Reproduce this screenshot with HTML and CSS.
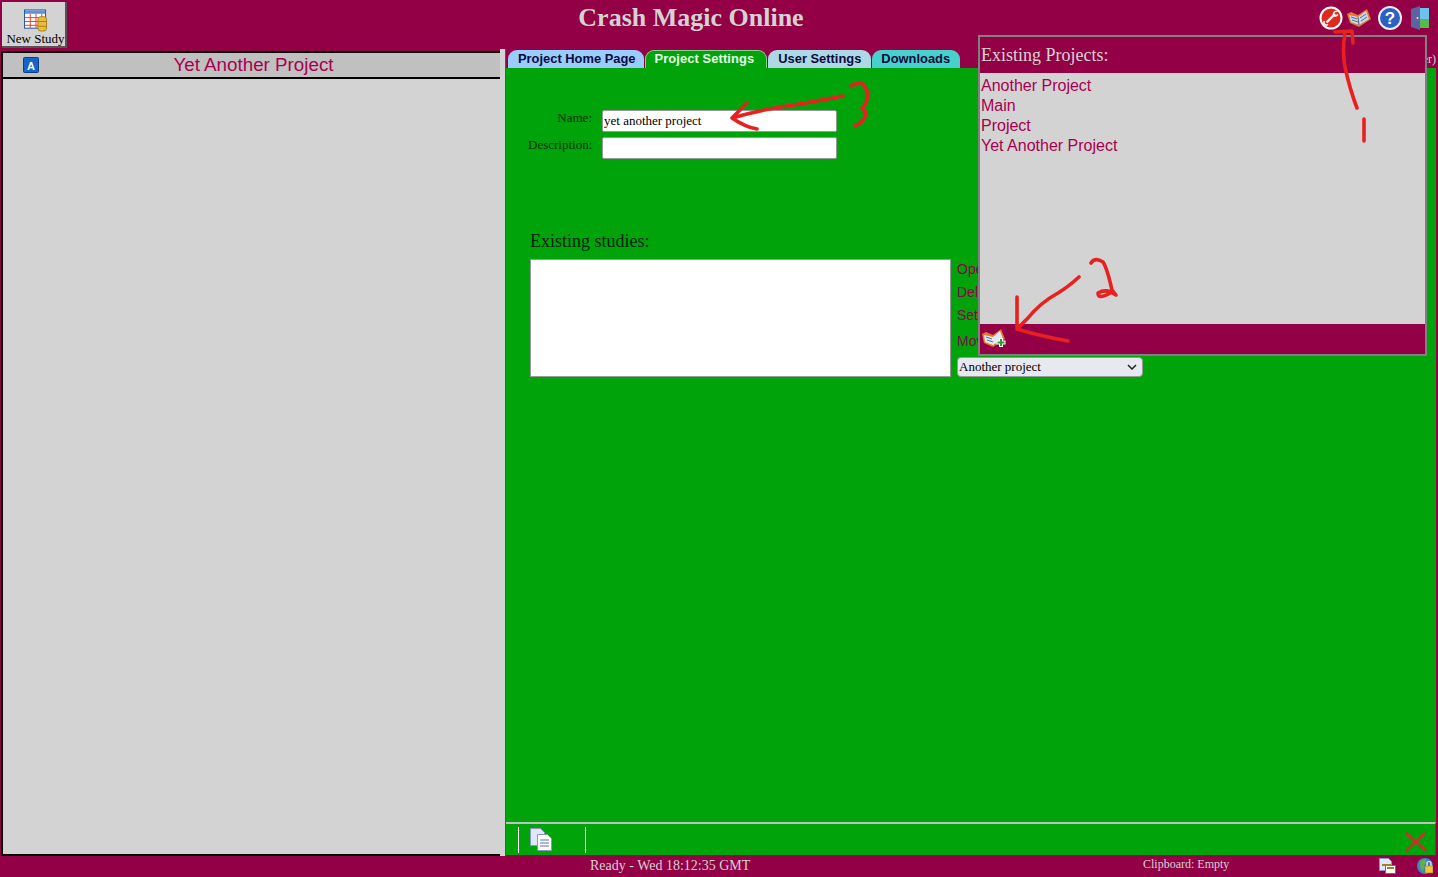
FILE: index.html
```html
<!DOCTYPE html>
<html lang="en">
<head>
  <meta charset="UTF-8" />
  <title>Crash Magic Online</title>
  <link rel="stylesheet" href="styles.css">
</head>
<body>
<div class="app">

  <div class="header">
    <button class="new-study">
      <svg width="26" height="24" viewBox="0 0 26 24">
        <rect x="1" y="1" width="22" height="19" fill="#fff" stroke="#1d4f9c"/>
        <rect x="1.500" y="1.500" width="21" height="3.500" fill="#5b93dc"/>
        <path d="M1 9h22M1 13h22M1 17h22M7 5v15M13 5v15M19 5v15" stroke="#e8392c" fill="none"/>
        <rect x="15" y="8" width="9" height="15" rx="3" fill="#e8bf3c" stroke="#a5801c"/>
        <path d="M15 13h9M15 18h9" stroke="#a5801c" fill="none"/>
      </svg>
      <span>New Study</span>
    </button>
    <div class="app-title">Crash Magic Online</div>
    <div class="header-icons">
      <svg width="24" height="24" viewBox="0 0 24 24">
        <circle cx="12" cy="12" r="10.500" fill="#dd2a1c" stroke="#fff" stroke-width="2"/>
        <path d="M7.500 16.500L16 8" stroke="#fff" stroke-width="2.400" fill="none"/>
        <path d="M18.500 5.500a3 3 0 0 0-4 3.500M18.800 8.500a3 3 0 0 1-3.500 1.200M5.500 15a2.500 2.500 0 0 0 3.500 3.500" stroke="#fff" stroke-width="1.500" fill="none"/>
      </svg>
      <svg width="24" height="20" viewBox="0 0 24 20">
        <path d="M0 6l4-2 7 3 9-6 4 10-12 8-9-4z" fill="#e8782a"/>
        <path d="M2 7l9 2 8-6 3 8-10 6-8-3z" fill="#c8d8ea"/>
        <path d="M11 9l1 8" stroke="#46607c"/>
        <path d="M4 9l6 2M5 12l6 2M13 10l6-4M14 13l6-4" stroke="#55708c" fill="none"/>
      </svg>
      <svg class="help-icon" width="24" height="24" viewBox="0 0 24 24">
        <circle cx="12" cy="12" r="11" fill="#2c62bf" stroke="#e8eef8" stroke-width="2"/>
        <text class="help-mark" x="12" y="18" text-anchor="middle">?</text>
      </svg>
      <svg class="door-icon" width="20" height="24" viewBox="0 0 20 24">
        <rect x="8" y="2" width="11" height="20" fill="#54bb4c"/>
        <rect x="8" y="2" width="11" height="11" fill="#6cc3ee"/>
        <path d="M1 3l9-3v24l-9-3z" fill="#5d62a0"/>
        <circle cx="7.500" cy="12" r="1" fill="#e8e8f4"/>
      </svg>
    </div>
  </div>

  <div class="main">
    <div class="left-pane">
      <div class="left-title">
        <svg class="a-icon" width="16" height="16" viewBox="0 0 16 16">
          <rect x=".5" y=".5" width="15" height="15" rx="1" fill="#1565c8" stroke="#0b3e86"/>
          <text class="a-mark" x="8" y="12.500" text-anchor="middle">A</text>
        </svg>
        <span>Yet Another Project</span>
      </div>
    </div>
    <div class="splitter"></div>
    <div class="right-pane">
      <div class="tabs">
        <div class="tab tab-home">Project Home Page</div>
        <div class="tab tab-project">Project Settings</div>
        <div class="tab tab-user">User Settings</div>
        <div class="tab tab-downloads">Downloads</div>
        <div class="tabs-note">(User)</div>
      </div>
      <div class="content">
        <div class="fields">
          <label class="field-label">Name:</label>
          <input class="field-input" type="text" value="yet another project">
          <label class="field-label">Description:</label>
          <input class="field-input" type="text">
        </div>
        <h2 class="studies-title">Existing studies:</h2>
        <div class="studies">
          <div class="studies-list"></div>
          <div class="study-actions">
            <a>Open</a>
            <a>Delete</a>
            <a>Set default</a>
            <a class="move-link">Move to</a>
            <div class="move-select">
              <span>Another project</span>
              <svg width="10" height="6" viewBox="0 0 10 6">
                <path d="M1 1l4 4 4-4" stroke="#222" stroke-width="1.500" fill="none"/>
              </svg>
            </div>
          </div>
        </div>
      </div>
      <div class="toolbar">
        <div class="tool-group">
          <svg width="24" height="24" viewBox="0 0 24 24">
            <path d="M1.500 1.500h10l4 4v13h-14z" fill="#dfe8fb" stroke="#8b93c8"/>
            <path d="M8.500 7.500h10l4 4v12h-14z" fill="#fff" stroke="#8b93c8"/>
            <path d="M11 13h9M11 16h9M11 19h9" stroke="#5f6fb0"/>
          </svg>
        </div>
        <svg class="close-x" width="22" height="20" viewBox="0 0 22 20">
          <path d="M1 1l20 18M20 1L1 19" stroke="#e4222a" stroke-width="2.400" fill="none"/>
        </svg>
      </div>
    </div>
  </div>

  <div class="status">
    <div class="status-ready">Ready - Wed 18:12:35 GMT</div>
    <div class="status-clip">Clipboard: Empty</div>
    <svg class="status-icon-a" width="17" height="16" viewBox="0 0 17 16">
      <path d="M.5.500h9l3 3v9h-12z" fill="#dfe8fb" stroke="#8b93c8"/>
      <rect x="6.500" y="7.500" width="10" height="8" fill="#fff" stroke="#2c9a3a"/>
      <path d="M3 7h9M8 10h7" stroke="#a5801c" stroke-width="2"/>
    </svg>
    <svg class="status-icon-b" width="16" height="16" viewBox="0 0 16 16">
      <circle cx="8" cy="8" r="8" fill="#3a86d0"/>
      <path d="M3 3l5-2 2 3-3 3 1 3-3 3-2-4z" fill="#5fb04a"/>
      <rect x="8" y="8" width="8" height="7" fill="#efc53a" stroke="#8a6c14" stroke-width=".5"/>
      <path d="M10 8V5.500a2 2 0 0 1 4 0V8" stroke="#eee" stroke-width="1.200" fill="none"/>
    </svg>
  </div>

  <div class="projects-menu">
    <div class="menu-head">Existing Projects:</div>
    <div class="menu-list">
      <a>Another Project</a>
      <a>Main</a>
      <a>Project</a>
      <a>Yet Another Project</a>
    </div>
    <div class="menu-foot">
      <svg width="25" height="21" viewBox="0 0 25 21">
        <path d="M0 6l4-2 7 3 8-6 4 10-12 8-9-4z" fill="#e8782a"/>
        <path d="M2 7l9 2 7-6 3 8-10 6-8-3z" fill="#dfe9f4"/>
        <path d="M4 9l6 2M5 12l6 2" stroke="#55708c" fill="none"/>
        <path d="M19 10v9M14.500 14.500h9" stroke="#fff" stroke-width="4"/>
        <path d="M19 11v7M15.500 14.500h7" stroke="#2ca02c" stroke-width="2"/>
      </svg>
    </div>
  </div>

  <!-- red pen notes drawn on top of the screenshot -->
  <svg class="scribbles" width="1438" height="877" viewBox="0 0 1438 877">
    <path d="M1357 108Q1350 90 1345 67Q1342 50 1345 33M1335 32L1352 31L1353 43"/>
    <path d="M1364 119V141"/>
    <path d="M1079 277Q1068 287 1058 293Q1040 303 1028 318L1017 329M1017 297V329Q1040 336 1068 341"/>
    <path d="M1091 263Q1095 257 1103 262Q1107 268 1112 290L1116 295Q1107 288 1098 293Q1098 300 1110 293"/>
    <path d="M843 96Q813 102 787 106Q760 110 732 118M747 103L732 118Q745 127 757 129"/>
    <path d="M851 86Q858 82 862 83Q870 92 867 100Q865 106 862 108Q868 113 864 119Q860 124 855 126"/>
  </svg>

</div>
</body>
</html>
```

FILE: styles.css
```css
html, body {
  margin: 0;
  height: 100%;
  overflow: hidden;
}
body {
  background-color: #fff;
  font-family: "Liberation Serif", serif;
}
.app {
  position: relative;
  width: 1438px;
  height: 877px;
  box-sizing: border-box;
  padding-top: 2px;
  display: flex;
  flex-direction: column;
  background-color: #930046;
}
.header {
  height: 47px;
  flex: none;
  position: relative;
  padding-left: 2px;
  display: flex;
  align-items: flex-start;
}
.new-study {
  width: 65px;
  height: 46px;
  box-sizing: border-box;
  padding: 7px 0 0 4px;
  border: 0;
  border-right: 2px solid #555;
  border-bottom: 2px solid #555;
  background-color: #d3d3d3;
  font-family: "Liberation Serif", serif;
  font-size: 13px;
  color: #000;
  display: flex;
  flex-direction: column;
  align-items: center;
  line-height: 14px;
}
.new-study span {
  white-space: nowrap;
  margin-top: 0;
}
.app-title {
  position: absolute;
  left: 0;
  width: 1382px;
  top: 1px;
  text-align: center;
  font-size: 26px;
  font-weight: bold;
  line-height: 30px;
  color: #d3d3d3;
}
.header-icons {
  margin-left: auto;
  padding: 4px 8px 0 0;
  display: flex;
  gap: 4px;
  align-items: center;
}
.help-icon {
  margin-left: 3px;
}
.door-icon {
  margin-left: 4px;
}
.help-mark {
  font-family: "Liberation Sans", sans-serif;
  font-weight: bold;
  font-size: 17px;
  fill: #fff;
}
.a-mark {
  font-family: "Liberation Sans", sans-serif;
  font-weight: bold;
  font-size: 11px;
  fill: #fff;
}

.main {
  flex: 1;
  display: flex;
  min-height: 0;
  padding-left: 1px;
  padding-right: 2px;
}
.left-pane {
  width: 499px;
  flex: none;
  box-sizing: border-box;
  margin-top: 2px;
  background-color: #d3d3d3;
  border-left: 2px solid #000;
  border-bottom: 2px solid #000;
}
.left-title {
  height: 24px;
  position: relative;
  padding-left: 4px;
  background-color: #c0c0c0;
  border-top: 2px solid #000;
  border-bottom: 2px solid #000;
  text-align: center;
  font-family: "Liberation Sans", sans-serif;
  font-size: 18.800px;
  line-height: 24px;
  color: #a8004f;
}
.a-icon {
  position: absolute;
  left: 20px;
  top: 4px;
}
.splitter {
  width: 6px;
  flex: none;
  background-color: #d3d3d3;
  border-right: 1px solid #555;
  box-sizing: border-box;
}
.right-pane {
  flex: 1;
  min-width: 0;
  display: flex;
  flex-direction: column;
}
.tabs {
  height: 19px;
  flex: none;
  display: flex;
  align-items: flex-end;
  gap: 1px;
  padding-left: 2px;
}
.tab {
  height: 18px;
  box-sizing: border-box;
  border-radius: 9px 9px 0 0;
  font-family: "Liberation Sans", sans-serif;
  font-weight: bold;
  font-size: 12.900px;
  line-height: 17px;
  color: #0b0b3a;
}
.tab-home {
  padding: 0 8px 0 10px;
  background-color: #99ccff;
}
.tab-project {
  padding: 0 12px 0 9px;
  background-color: #00a30a;
  color: #e8ffe8;
  border: 1px solid #7fd48a;
  border-bottom: 0;
  line-height: 16px;
  letter-spacing: .1px;
}
.tab-user {
  padding: 0 10px;
  background-color: #add8e6;
}
.tab-downloads {
  padding: 0 10px 0 9px;
  background-color: #48d1cc;
}
.tabs-note {
  margin-left: auto;
  font-size: 12px;
  color: #d3d3d3;
  line-height: 20px;
  align-self: flex-start;
}
.content {
  flex: 1;
  min-height: 0;
  background-color: #00a30a;
  padding: 42px 0 0 22px;
}
.fields {
  display: grid;
  grid-template-columns: 64px 235px;
  column-gap: 10px;
  row-gap: 5px;
  align-items: center;
}
.field-label {
  font-size: 13px;
  text-align: right;
  color: #003000;
  position: relative;
  top: -3px;
}
.field-input {
  height: 22px;
  box-sizing: border-box;
  padding: 0 1px;
  border: 1px solid #999;
  border-radius: 2px;
  background: #fff;
  font-family: "Liberation Serif", serif;
  font-size: 13px;
  color: #000;
}
.studies-title {
  margin: 71px 0 7px 2px;
  font-size: 18px;
  font-weight: normal;
  line-height: 22px;
  color: #002400;
}
.studies {
  display: flex;
  margin-left: 2px;
  gap: 6px;
}
.studies-list {
  width: 421px;
  height: 118px;
  box-sizing: border-box;
  background: #fff;
  border: 1px solid #999;
}
.study-actions {
  display: flex;
  flex-direction: column;
  align-items: flex-start;
  font-family: "Liberation Sans", sans-serif;
  font-size: 14px;
  line-height: 16px;
  color: #930046;
  padding-top: 2px;
  row-gap: 7px;
}
.move-link {
  margin-top: 3px;
}
.move-select {
  width: 186px;
  height: 20px;
  margin-top: 1px;
  box-sizing: border-box;
  padding: 0 5px 0 1px;
  display: flex;
  align-items: center;
  justify-content: space-between;
  background-color: #e8e8f0;
  border: 1px solid #999;
  border-radius: 4px;
  font-family: "Liberation Serif", serif;
  font-size: 13px;
  color: #000;
}
.toolbar {
  height: 31px;
  flex: none;
  display: flex;
  align-items: center;
  justify-content: space-between;
  background-color: #00a30a;
  border-top: 2px solid #c0c0c0;
  border-right: 1px solid #3a5a3a;
  border-bottom: 1px solid #0a5a14;
  padding: 0 0 0 12px;
}
.tool-group {
  width: 68px;
  height: 26px;
  box-sizing: border-box;
  border-left: 1px solid #fff;
  border-right: 1px solid #fff;
  padding-left: 10px;
}
.close-x {
  margin: 5px 8px 0 0;
}

.status {
  height: 21px;
  flex: none;
  position: relative;
  font-size: 14px;
  line-height: 19px;
  color: #d3d3d3;
  border-bottom-right-radius: 6px;
}
.status-ready {
  position: absolute;
  left: 590px;
  top: 0;
}
.status-clip {
  position: absolute;
  left: 1143px;
  top: 0;
  font-size: 12px;
  line-height: 17px;
}
.status-icon-a {
  position: absolute;
  left: 1379px;
  top: 2px;
}
.status-icon-b {
  position: absolute;
  left: 1417px;
  top: 2px;
}

.projects-menu {
  position: absolute;
  left: 978px;
  top: 35px;
  width: 449px;
  height: 321px;
  box-sizing: border-box;
  border: 2px solid #808080;
  background-color: #930046;
  display: flex;
  flex-direction: column;
}
.menu-head {
  height: 36px;
  padding: 8px 0 0 1px;
  box-sizing: border-box;
  font-size: 18px;
  line-height: 21px;
  color: #d3d3d3;
}
.menu-list {
  height: 251px;
  padding: 3px 0 0 1px;
  box-sizing: border-box;
  background-color: #d3d3d3;
  font-family: "Liberation Sans", sans-serif;
  font-size: 16px;
  line-height: 20px;
  color: #a8004f;
  display: flex;
  flex-direction: column;
}
.menu-foot {
  padding: 4px 0 0 2px;
}
.scribbles {
  position: absolute;
  left: 0;
  top: 0;
  pointer-events: none;
  fill: none;
  stroke: #e8201f;
  stroke-width: 3.600;
  stroke-linecap: round;
  stroke-linejoin: round;
}
```
